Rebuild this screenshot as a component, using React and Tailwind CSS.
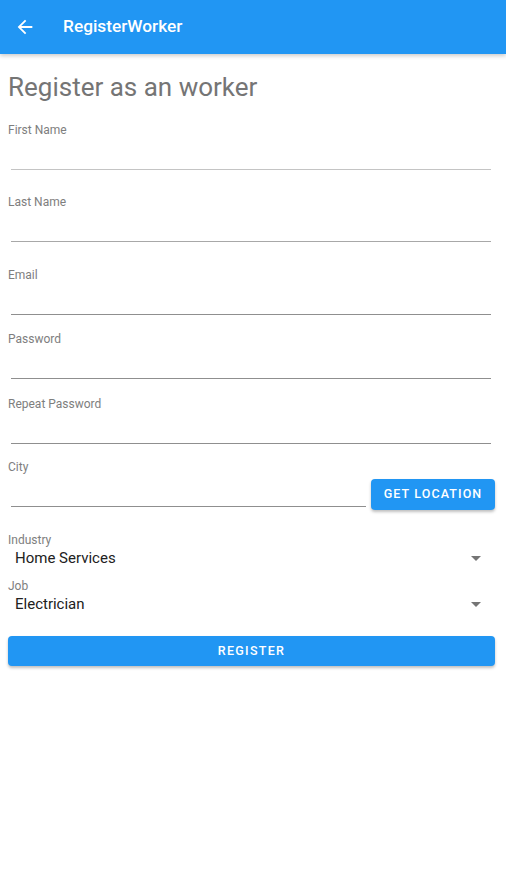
import React from "react";

const fields = [
  { label: "First Name", line: "border-[#c4c4c4]", gap: "mb-[24px]" },
  { label: "Last Name", line: "border-[#a8a8a8]", gap: "mb-[25px]" },
  { label: "Email", line: "border-[#8f8f8f]", gap: "mb-[16px]" },
  { label: "Password", line: "border-[#8f8f8f]", gap: "mb-[17px]" },
  { label: "Repeat Password", line: "border-[#8f8f8f]", gap: "mb-[15px]" },
];

const Arrow = () => (
  <svg width="10" height="5" viewBox="0 0 10 5" className="mr-[17px]">
    <path d="M0 0l5 5 5-5z" fill="#757575" />
  </svg>
);

const Select = ({ label, value }) => (
  <div className="flex flex-col">
    <span className="text-xs leading-4 text-[#7e7e7e]">{label}</span>
    <div className="flex items-center justify-between h-[22px] -mt-px">
      <span className="pl-[7px] text-[15px] text-[#212121]">{value}</span>
      <Arrow />
    </div>
  </div>
);

export default function App() {
  return (
    <div className="min-h-[893px] bg-white font-['Roboto',sans-serif]">
      <header className="h-[54px] bg-[#2196f3] flex items-center shadow-[0_2px_4px_rgba(0,0,0,0.2)]">
        <svg width="22" height="22" viewBox="0 0 24 24" className="ml-[14px]">
          <path fill="#fff" d="M20 11H7.83l5.59-5.59L12 4l-8 8 8 8 1.41-1.41L7.83 13H20v-2z" />
        </svg>
        <h1 className="ml-[27px] text-white text-[17.3px] font-medium">RegisterWorker</h1>
      </header>

      <main className="px-2">
        <h2 className="mt-[17px] text-[26px] leading-8 text-[#757575]">Register as an worker</h2>

        <div className="mt-[19px] flex flex-col">
          {fields.map((f) => (
            <div key={f.label} className={`flex flex-col ${f.gap}`}>
              <span className="text-xs leading-4 text-[#7e7e7e]">{f.label}</span>
              <div className={`h-[32px] ml-[3px] mr-[7px] border-b ${f.line}`} />
            </div>
          ))}

          <div className="flex flex-col mr-[3px]">
            <span className="text-xs leading-4 text-[#7e7e7e]">City</span>
            <div className="flex items-end gap-[5px]">
              <div className="flex-1 h-[32px] ml-[3px] border-b border-[#8f8f8f]" />
              <button className="h-[31px] w-[124px] mb-[-3px] rounded bg-[#2196f3] text-white text-[12.5px] font-medium tracking-[1.1px] shadow-[0_2px_3px_rgba(0,0,0,0.25)]">
                GET LOCATION
              </button>
            </div>
          </div>

          <div className="mt-[25px] flex flex-col gap-[9px]">
            <Select label="Industry" value="Home Services" />
            <Select label="Job" value="Electrician" />
          </div>

          <button className="mt-[21px] mr-[3px] h-[30px] rounded bg-[#2196f3] text-white text-[12.5px] font-medium tracking-[1.3px] shadow-[0_2px_3px_rgba(0,0,0,0.25)]">
            REGISTER
          </button>
        </div>
      </main>
    </div>
  );
}
